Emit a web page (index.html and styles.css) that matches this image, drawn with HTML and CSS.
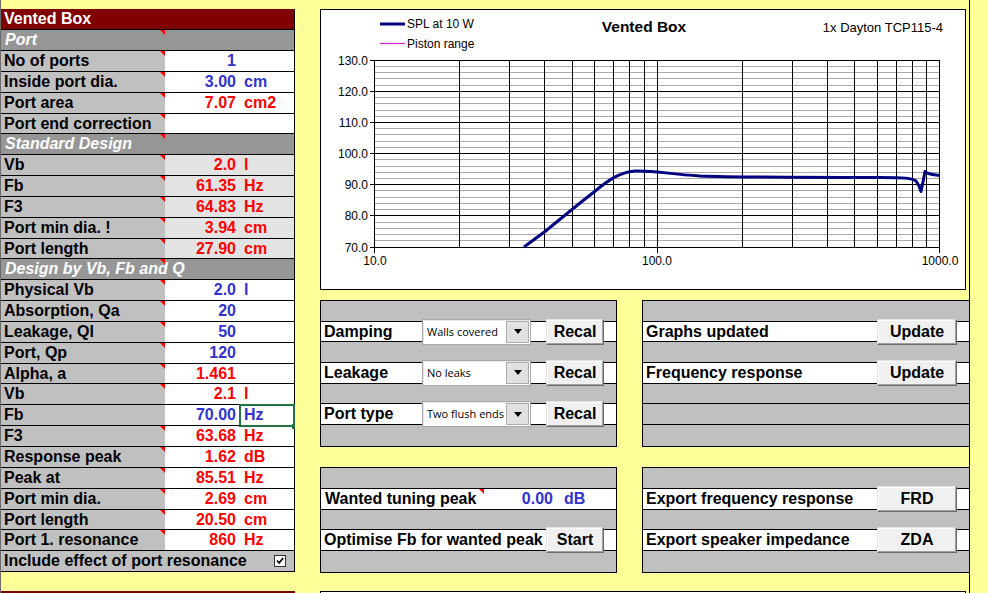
FILE: index.html
```html
<!DOCTYPE html>
<html lang="en">
<head>
    <meta charset="UTF-8">
    <meta name="viewport" content="width=device-width, initial-scale=1.0">
    <title>Vented Box</title>
    <link rel="stylesheet" href="styles.css">
</head>
<body>
    <div class="sheet">
        <div class="left_col">
            <div class="box_panel">
                <div class="row head">Vented Box</div>
                <div class="row section"><span class="lbl c">Port</span></div>
                <div class="row"><span class="lbl c">No of ports</span><span class="num blue">1</span><span class="unit"></span></div>
                <div class="row"><span class="lbl c">Inside port dia.</span><span class="num blue">3.00</span><span class="unit blue">cm</span></div>
                <div class="row"><span class="lbl c">Port area</span><span class="num red">7.07</span><span class="unit red">cm2</span></div>
                <div class="row"><span class="lbl c">Port end correction</span><span class="num"></span><span class="unit"></span></div>
                <div class="row section"><span class="lbl c">Standard Design</span></div>
                <div class="row calc"><span class="lbl c">Vb</span><span class="num red">2.0</span><span class="unit red">l</span></div>
                <div class="row calc"><span class="lbl c">Fb</span><span class="num red">61.35</span><span class="unit red">Hz</span></div>
                <div class="row calc"><span class="lbl c">F3</span><span class="num red">64.83</span><span class="unit red">Hz</span></div>
                <div class="row calc"><span class="lbl c">Port min dia. !</span><span class="num red">3.94</span><span class="unit red">cm</span></div>
                <div class="row calc"><span class="lbl c">Port length</span><span class="num red">27.90</span><span class="unit red">cm</span></div>
                <div class="row section"><span class="lbl c">Design by Vb, Fb and Q</span></div>
                <div class="row"><span class="lbl c">Physical Vb</span><span class="num blue">2.0</span><span class="unit blue">l</span></div>
                <div class="row"><span class="lbl c">Absorption, Qa</span><span class="num blue">20</span><span class="unit"></span></div>
                <div class="row"><span class="lbl c">Leakage, Ql</span><span class="num blue">50</span><span class="unit"></span></div>
                <div class="row"><span class="lbl c">Port, Qp</span><span class="num blue">120</span><span class="unit"></span></div>
                <div class="row"><span class="lbl c">Alpha, a</span><span class="num red">1.461</span><span class="unit"></span></div>
                <div class="row"><span class="lbl c">Vb</span><span class="num red">2.1</span><span class="unit red">l</span></div>
                <div class="row"><span class="lbl">Fb</span><span class="num blue">70.00</span><span class="unit blue sel">Hz</span></div>
                <div class="row"><span class="lbl c">F3</span><span class="num red">63.68</span><span class="unit red">Hz</span></div>
                <div class="row"><span class="lbl c">Response peak</span><span class="num red">1.62</span><span class="unit red">dB</span></div>
                <div class="row"><span class="lbl c">Peak at</span><span class="num red">85.51</span><span class="unit red">Hz</span></div>
                <div class="row"><span class="lbl c">Port min dia.</span><span class="num red">2.69</span><span class="unit red">cm</span></div>
                <div class="row"><span class="lbl c">Port length</span><span class="num red">20.50</span><span class="unit red">cm</span></div>
                <div class="row"><span class="lbl c">Port 1. resonance</span><span class="num red">860</span><span class="unit red">Hz</span></div>
                <div class="row include">
                    <span>Include effect of port resonance</span>
                    <svg class="check" width="12" height="12" viewBox="0 0 12 12">
                        <rect x="0.5" y="0.5" width="11" height="11" fill="#fff" stroke="#333"/>
                        <path d="M3 5.5l2.2 2.4L9.2 3" fill="none" stroke="#000" stroke-width="1.7"/>
                    </svg>
                </div>
            </div>
            <div class="next_head"></div>
        </div>

        <div class="right_col">
            <div class="chart">
                <svg class="plot" width="644" height="279" viewBox="321 10 644 279">
                    <!-- legend and titles -->
                    <line x1="380" y1="24" x2="405" y2="24" stroke="#000080" stroke-width="3"/>
                    <text class="leg" x="407" y="28">SPL at 10 W</text>
                    <line x1="380" y1="43.5" x2="405" y2="43.5" stroke="#d020d0" stroke-width="1.2"/>
                    <text class="leg" x="407" y="47.5">Piston range</text>
                    <text class="title" x="644" y="32" text-anchor="middle">Vented Box</text>
                    <text class="driver" x="943" y="32" text-anchor="end">1x Dayton TCP115-4</text>

                    <!-- grid -->
                    <path stroke="#ababab" shape-rendering="crispEdges" d="M374.5 66.5H939.5M374.5 72.5H939.5M374.5 78.5H939.5M374.5 85.5H939.5M374.5 97.5H939.5M374.5 103.5H939.5M374.5 110.5H939.5M374.5 116.5H939.5M374.5 128.5H939.5M374.5 134.5H939.5M374.5 141.5H939.5M374.5 147.5H939.5M374.5 159.5H939.5M374.5 166.5H939.5M374.5 172.5H939.5M374.5 178.5H939.5M374.5 190.5H939.5M374.5 197.5H939.5M374.5 203.5H939.5M374.5 209.5H939.5M374.5 222.5H939.5M374.5 228.5H939.5M374.5 234.5H939.5M374.5 240.5H939.5"/>
                    <path stroke="#000" shape-rendering="crispEdges" d="M374.5 60.5V252.5M459.5 60.5V247.5M509.5 60.5V247.5M544.5 60.5V247.5M572.5 60.5V247.5M594.5 60.5V247.5M613.5 60.5V247.5M629.5 60.5V247.5M644.5 60.5V247.5M657.5 60.5V252.5M742.5 60.5V247.5M792.5 60.5V247.5M827.5 60.5V247.5M854.5 60.5V247.5M877.5 60.5V247.5M896.5 60.5V247.5M912.5 60.5V247.5M926.5 60.5V247.5M939.5 60.5V252.5"/>
                    <path stroke="#000" shape-rendering="crispEdges" d="M369.5 60.5H939.5M369.5 91.5H939.5M369.5 122.5H939.5M369.5 153.5H939.5M369.5 184.5H939.5M369.5 215.5H939.5M369.5 247.5H939.5"/>

                    <!-- axis labels -->
                    <g class="axis" text-anchor="end">
                        <text x="368" y="65">130.0</text>
                        <text x="368" y="96">120.0</text>
                        <text x="368" y="127">110.0</text>
                        <text x="368" y="158">100.0</text>
                        <text x="368" y="189">90.0</text>
                        <text x="368" y="220">80.0</text>
                        <text x="368" y="251.5">70.0</text>
                    </g>
                    <g class="axis" text-anchor="middle">
                        <text x="375" y="265">10.0</text>
                        <text x="657" y="265">100.0</text>
                        <text x="940" y="265">1000.0</text>
                    </g>

                    <!-- SPL curve -->
                    <path fill="none" stroke="#000080" stroke-width="3" stroke-linejoin="round" d="M524 247L545 231.5L564 216L580 203L594 192C606 182 619 172 635 171C651 170 668 174 700 176C740 177.5 800 177.5 880 177.5C905 177.5 912 178 916 181L919 186L921 191.5L923 182L925 171.5L927 173C931 174.5 935 175 940 175.5"/>
                </svg>
            </div>

            <div class="panel_row">
                <div class="panel left_p">
                    <div class="prow"></div>
                    <div class="prow white">
                        <span class="plbl opt">Damping</span>
                        <div class="combo"><span class="combo_text">Walls covered</span><span class="combo_btn"><i class="arrow"></i></span></div>
                        <button class="btn recal">Recal</button>
                    </div>
                    <div class="prow"></div>
                    <div class="prow white">
                        <span class="plbl opt">Leakage</span>
                        <div class="combo"><span class="combo_text">No leaks</span><span class="combo_btn"><i class="arrow"></i></span></div>
                        <button class="btn recal">Recal</button>
                    </div>
                    <div class="prow"></div>
                    <div class="prow white">
                        <span class="plbl opt">Port type</span>
                        <div class="combo"><span class="combo_text">Two flush ends</span><span class="combo_btn"><i class="arrow"></i></span></div>
                        <button class="btn recal">Recal</button>
                    </div>
                    <div class="prow"></div>
                </div>
                <div class="panel right_p">
                    <div class="prow"></div>
                    <div class="prow white">
                        <span class="plbl grow">Graphs updated</span>
                        <button class="btn wide">Update</button>
                    </div>
                    <div class="prow"></div>
                    <div class="prow white">
                        <span class="plbl grow">Frequency response</span>
                        <button class="btn wide">Update</button>
                    </div>
                    <div class="prow"></div>
                    <div class="prow"></div>
                    <div class="prow"></div>
                </div>
            </div>

            <div class="panel_row second">
                <div class="panel left_p">
                    <div class="prow"></div>
                    <div class="prow white">
                        <span class="plbl wanted c">Wanted tuning peak</span>
                        <span class="pnum blue">0.00</span><span class="punit blue">dB</span>
                    </div>
                    <div class="prow"></div>
                    <div class="prow white">
                        <span class="plbl optimise">Optimise Fb for wanted peak</span>
                        <button class="btn start">Start</button>
                    </div>
                    <div class="prow"></div>
                </div>
                <div class="panel right_p">
                    <div class="prow"></div>
                    <div class="prow white">
                        <span class="plbl grow">Export frequency response</span>
                        <button class="btn wide">FRD</button>
                    </div>
                    <div class="prow"></div>
                    <div class="prow white">
                        <span class="plbl grow">Export speaker impedance</span>
                        <button class="btn wide">ZDA</button>
                    </div>
                    <div class="prow"></div>
                </div>
            </div>

            <div class="next_chart"></div>
        </div>
    </div>
</body>
</html>
```

FILE: styles.css
```css
*{
    margin: 0;
    padding: 0;
    box-sizing: border-box;
}

html, body{
    height: 100%;
    overflow: hidden;
}

body{
    background: #ffff99;
    font-family: "Liberation Sans", Arial, sans-serif;
    font-size: 16px;
    font-weight: bold;
    color: #000;
}

.sheet{
    display: flex;
    height: 100vh;
    overflow: hidden;
}

/* left sheet block */

.left_col{
    width: 295px;
    height: 100vh;
    padding-top: 9.3px;
    border-left: 1px solid #6b6b6b;
    overflow: hidden;
}

.box_panel{
    border-right: 1px solid #000;
}

/* cell colours come from the row background so the row border is never covered */
.row{
    display: grid;
    grid-template-columns: 164px 75px 54px;
    height: 20.85px;
    line-height: 20.6px;
    border-bottom: 1px solid #000;
    white-space: nowrap;
    background: linear-gradient(90deg, #c0c0c0 164px, #fff 164px);
}

.row.calc{
    background: linear-gradient(90deg, #c0c0c0 164px, #e3e3e3 164px);
}

.row .lbl{
    position: relative;
    padding-left: 3px;
}

.row .num{
    text-align: right;
    padding-right: 4px;
}

.row .unit{
    padding-left: 4px;
}

.row.head{
    display: block;
    background: #800000;
    color: #fff;
    padding-left: 3px;
}

.row.section{
    background: #969696;
    color: #fff;
    font-style: italic;
}

.row.section .lbl{
    padding-left: 4px;
}

.row.include{
    display: flex;
    align-items: center;
    justify-content: space-between;
    background: #c0c0c0;
    padding: 0 8px 0 3px;
}

.check{
    display: block;
}

.blue{
    color: #3333cc;
}

.red{
    color: #ff0000;
}

/* red comment marker in the corner of a cell */
.c::after{
    content: '';
    position: absolute;
    top: 0;
    right: 0;
    border-top: 5px solid #ff0000;
    border-left: 5px solid transparent;
}

.sel{
    position: relative;
    outline: 2px solid #217346;
    outline-offset: -1px;
}

.sel::after{
    content: '';
    position: absolute;
    right: -3px;
    bottom: -3px;
    width: 5px;
    height: 5px;
    background: #217346;
}

.next_head{
    height: 21px;
    margin-top: 18.7px;
    background: #800000;
}

/* right side */

.right_col{
    width: 650px;
    height: 100vh;
    margin-left: 25px;
    padding-top: 9px;
    border-right: 1px solid #000;
    overflow: hidden;
}

.chart{
    width: 646px;
    height: 281px;
    border: 1px solid #000;
    background: #fff;
    margin-bottom: 10px;
}

.plot{
    display: block;
}

.plot text{
    font-family: "Liberation Sans", Arial, sans-serif;
    font-weight: normal;
    fill: #000;
}

.plot .leg{
    font-size: 12px;
}

.plot .title{
    font-size: 15.5px;
    font-weight: bold;
}

.plot .driver{
    font-size: 13px;
}

.plot .axis text{
    font-size: 12px;
}

.panel_row{
    display: flex;
    gap: 25px;
}

.panel_row.second{
    margin-top: 20.4px;
}

.panel{
    border: 1px solid #000;
    background: #c0c0c0;
}

.panel.left_p{
    width: 297px;
}

.panel.right_p{
    flex: 1;
    border-right: none;
}

.prow{
    display: flex;
    align-items: center;
    height: 20.7px;
    line-height: 20.4px;
    border-bottom: 1px solid #000;
    white-space: nowrap;
}

.prow:last-child{
    border-bottom: none;
}

.prow.white{
    background: #fff;
}

.plbl{
    position: relative;
    padding-left: 3px;
    align-self: stretch;
}

.plbl.opt{
    width: 101px;
}

.plbl.wanted{
    width: 163px;
    padding-left: 4px;
}

.plbl.optimise{
    width: 225px;
}

.plbl.grow{
    flex: 1;
}

.pnum{
    width: 74px;
    text-align: right;
    padding-right: 5px;
}

.punit{
    padding-left: 6px;
}

.combo{
    display: flex;
    width: 109px;
    height: 26px;
    background: #fff;
    border: 1px solid #a8a8a8;
    box-shadow: inset 1px 1px #e8e8e8;
    overflow: hidden;
}

.combo_text{
    flex: 1;
    font-family: "Open Sans", "DejaVu Sans", sans-serif;
    font-weight: normal;
    font-size: 11px;
    line-height: 24px;
    padding-left: 4px;
    overflow: hidden;
}

.combo_btn{
    display: flex;
    align-items: center;
    justify-content: center;
    width: 23px;
    margin: 1px;
    background: #e1e1e1;
    border: 1px solid #adadad;
}

.arrow{
    border-left: 4.5px solid transparent;
    border-right: 4.5px solid transparent;
    border-top: 5px solid #000;
}

.btn{
    position: relative;
    height: 26px;
    font: inherit;
    line-height: 24px;
    text-align: center;
    color: #000;
    background: #f0f0f0;
    border: 1px solid;
    border-color: #e3e3e3 #6d6d6d #6d6d6d #e3e3e3;
    box-shadow: inset -1px -1px #a0a0a0, inset 1px 1px #fff;
}

.btn.recal{
    width: 58px;
    margin-left: 15px;
}

.btn.start{
    width: 58px;
}

.btn.wide{
    width: 80px;
    margin-right: 12px;
}

.next_chart{
    width: 646px;
    height: 80px;
    margin-top: 18.2px;
    border: 1px solid #000;
    background: #fff;
}
```
